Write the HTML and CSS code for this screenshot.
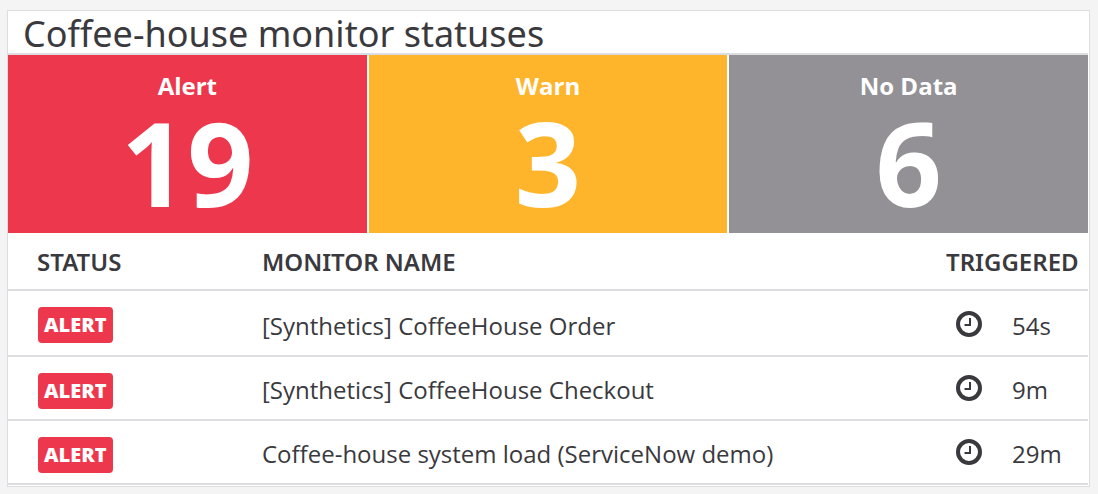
FILE: index.html
```html
<!DOCTYPE html>
<html lang="en">
<head>
<meta charset="utf-8">
<title>Coffee-house monitor statuses</title>
<link rel="stylesheet" href="styles.css">
</head>
<body>
<section class="widget">
  <h1 class="title">Coffee-house monitor statuses</h1>
  <div class="summary">
    <div class="tile alert"><span class="label">Alert</span><span class="count">19</span></div>
    <div class="tile warn"><span class="label">Warn</span><span class="count">3</span></div>
    <div class="tile nodata"><span class="label">No Data</span><span class="count">6</span></div>
  </div>
  <table class="monitors">
    <thead>
      <tr><th class="status">STATUS</th><th>MONITOR NAME</th><th class="triggered">TRIGGERED</th></tr>
    </thead>
    <tbody>
      <tr>
        <td class="status"><span class="badge">ALERT</span></td>
        <td>[Synthetics] CoffeeHouse Order</td>
        <td class="triggered"><div class="time"><svg class="clock" viewBox="0 0 26 26" aria-hidden="true"><circle cx="13" cy="13" r="11"/><path d="M14 7v7H8.500"/></svg><span>54s</span></div></td>
      </tr>
      <tr>
        <td class="status"><span class="badge">ALERT</span></td>
        <td>[Synthetics] CoffeeHouse Checkout</td>
        <td class="triggered"><div class="time"><svg class="clock" viewBox="0 0 26 26" aria-hidden="true"><circle cx="13" cy="13" r="11"/><path d="M14 7v7H8.500"/></svg><span>9m</span></div></td>
      </tr>
      <tr>
        <td class="status"><span class="badge">ALERT</span></td>
        <td>Coffee-house system load (ServiceNow demo)</td>
        <td class="triggered"><div class="time"><svg class="clock" viewBox="0 0 26 26" aria-hidden="true"><circle cx="13" cy="13" r="11"/><path d="M14 7v7H8.500"/></svg><span>29m</span></div></td>
      </tr>
    </tbody>
  </table>
</section>
</body>
</html>
```
FILE: styles.css
```css
* { box-sizing: border-box; }
body {
  margin: 0;
  padding: 10px 8px 8px 7px;
  background: #f4f4f4;
  color: #3a393e;
  font-family: "Open Sans", "Noto Sans", sans-serif;
}
.widget {
  padding: 0 1px 1px 0;
  background: #fff;
  border: 1px solid #dddce1;
}
.title {
  margin: 0;
  padding: 3px 15px 0;
  border-bottom: 2px solid #dddce1;
  font-family: "Noto Sans", "Open Sans", sans-serif;
  font-size: 36px;
  font-weight: 400;
  line-height: 39px;
}
.summary {
  display: grid;
  grid-template-columns: repeat(3, 1fr);
  gap: 2px;
}
.tile {
  display: flex;
  flex-direction: column;
  align-items: center;
  padding: 15px 0 11px;
  color: #fff;
}
.alert { background: #ed374d; }
.warn { background: #ffb52b; }
.nodata { background: #939196; }
.label { font-size: 24px; font-weight: 700; line-height: 32px; }
.count { font-size: 116px; font-weight: 700; line-height: 120px; }
.monitors {
  width: 100%;
  border-spacing: 0;
  font-size: 24px;
  line-height: 32px;
}
th, td {
  padding: 0;
  border-bottom: 2px solid #dddce1;
  text-align: left;
  vertical-align: top;
}
th {
  padding: 13px 0 11px;
  font-family: "Noto Sans", "Open Sans", sans-serif;
  font-weight: 600;
}
td { height: 64px; padding-top: 17px; }
tbody tr:first-child td { height: 66px; padding-top: 19px; }
.status { width: 254px; padding-left: 29px; }
tbody td.status, tbody tr:first-child td.status { padding-top: 16px; padding-left: 30px; }
.triggered { width: 142px; }
.badge {
  display: block;
  width: max-content;
  padding: 0 6px;
  border-radius: 4px;
  background: #ed374d;
  color: #fff;
  font-size: 20px;
  font-weight: 800;
  line-height: 36px;
}
.time {
  display: flex;
  align-items: center;
  gap: 30px;
  padding-left: 10px;
}
.clock {
  width: 26px;
  height: 26px;
  margin-bottom: 4px;
  fill: none;
  stroke: #3a393e;
  stroke-width: 4;
}
.clock path { stroke-width: 2; }
```
